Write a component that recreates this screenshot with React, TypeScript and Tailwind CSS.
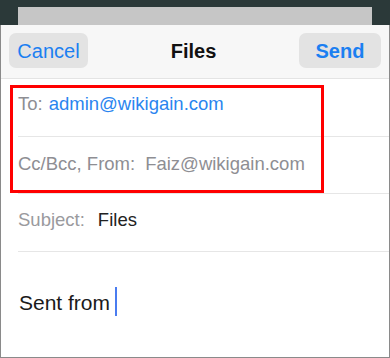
export default function App() {
  return (
    <div className="relative w-[390px] h-[358px] overflow-hidden bg-white font-['Liberation_Sans',Arial,sans-serif]">
      {/* top strip of the sheet behind */}
      <div className="h-[25px] bg-[#2b3939] px-[18px] pt-[7px]">
        <div className="h-full bg-[#c6c6c6]" />
      </div>

      <div className="h-[333px] border-x border-b border-[#8a8a8a] flex flex-col">
        {/* header */}
        <div className="h-[54px] shrink-0 bg-[#f7f7f7] border-b border-[#e4e4e4] flex items-start justify-between px-[8px] pt-[8px]">
          <button className="w-[79px] h-[35px] rounded-[7px] bg-[#e3e3e3] text-[20px] text-[#1b7ff1] leading-none">
            Cancel
          </button>
          <div className="h-[35px] flex items-center text-[20px] font-bold text-[#111111] leading-none">
            Files
          </div>
          <button className="w-[82px] h-[35px] rounded-[7px] bg-[#e3e3e3] text-[20px] font-bold text-[#1b7ff1] leading-none">
            Send
          </button>
        </div>

        {/* fields */}
        <div className="ml-[17px] h-[58px] pt-[16px] border-b border-[#e6e6e6] flex text-[18.5px] leading-none">
          <span className="text-[#8e8e93]">To:</span>
          <span className="ml-[6px] text-[#2a85ef]">admin@wikigain.com</span>
        </div>
        <div className="ml-[17px] h-[57px] pt-[18px] border-b border-[#e6e6e6] flex text-[18.5px] leading-none">
          <span className="text-[#8e8e93]">Cc/Bcc, From:</span>
          <span className="ml-[10px] text-[#8e8e93]">Faiz@wikigain.com</span>
        </div>
        <div className="ml-[17px] h-[58px] pt-[17px] border-b border-[#e6e6e6] flex text-[18.5px] leading-none">
          <span className="text-[#9a9a9e]">Subject:</span>
          <span className="ml-[13px] text-[#222222]">Files</span>
        </div>

        {/* body */}
        <div className="ml-[18px] pt-[35px] flex items-start">
          <span className="mt-[5px] text-[21px] leading-none text-[#1a1a1a]">Sent from</span>
          <span className="ml-[5px] w-[2px] h-[29px] bg-[#4a7cf0]" />
        </div>
      </div>

      {/* annotation box */}
      <div className="absolute left-[10px] top-[85px] w-[314px] h-[108px] border-[3px] border-[#ff0000]" />
    </div>
  );
}
